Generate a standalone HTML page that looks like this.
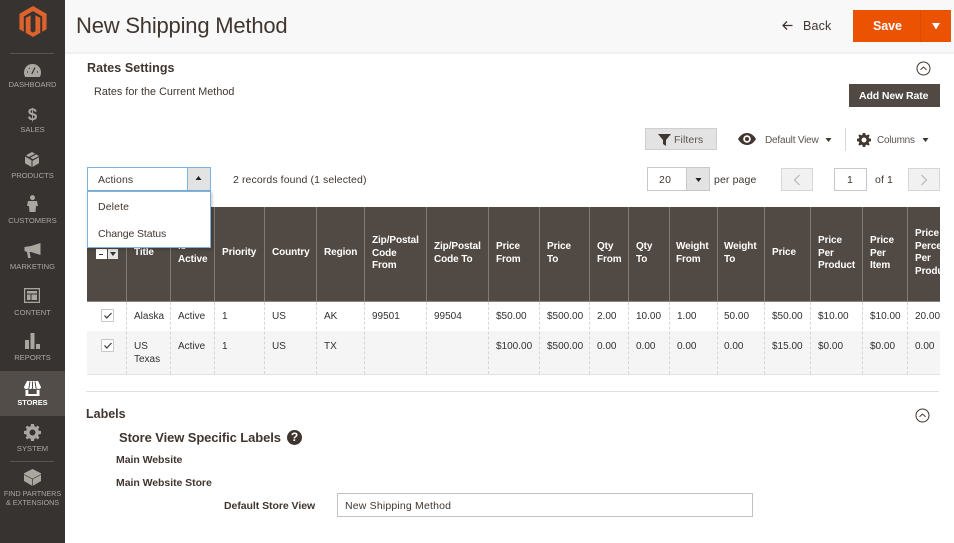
<!DOCTYPE html>
<html><head><meta charset="utf-8"><title>New Shipping Method</title>
<style>
html,body{margin:0;padding:0;width:954px;height:543px;overflow:hidden;background:#fff}
body{font-family:"Liberation Sans",sans-serif;color:#41362f;position:relative;filter:blur(.3px)}
.a{position:absolute}
.t{position:absolute;white-space:nowrap;font-size:10.5px;line-height:12px;color:#41362f;letter-spacing:.12px}
.n{position:absolute;left:0;width:65px;text-align:center;font-size:7.6px;line-height:9px;color:#aaa6a0;white-space:nowrap}
.h{position:absolute;white-space:nowrap;font-size:10px;line-height:12.6px;font-weight:bold;color:#fff;letter-spacing:-.1px}
.c{position:absolute;white-space:nowrap;font-size:10px;line-height:13px;color:#303030;letter-spacing:0}
.vh{position:absolute;top:207px;height:94px;width:1px;background:#7f7a75}
.vd{position:absolute;top:302px;height:72px;width:0;border-left:1px dashed #d6d6d6}
.cb{position:absolute;left:101px;width:11px;height:11px;border:1px solid #c8c8c8;background:#fff;border-radius:1px}
</style></head><body>

<div class="a" style="left:65px;top:0;width:889px;height:53px;background:#f8f8f8"></div>
<div class="a" style="left:65px;top:52px;width:889px;height:2px;background:#f0f0f0"></div>
<div class="t" style="left:76px;top:12px;font-size:22px;line-height:28px;letter-spacing:-.2px;color:#41362f">New Shipping Method</div>

<svg class="a" style="left:781px;top:20px" width="13" height="11" viewBox="0 0 13 11"><path d="M11.5 5.5H2M6 1.5 2 5.5l4 4" fill="none" stroke="#41362f" stroke-width="1.3"/></svg>
<div class="t" style="left:803px;top:18px;font-size:12.5px;line-height:16px;color:#41362f;letter-spacing:.15px">Back</div>
<div class="a" style="left:853px;top:10px;width:98px;height:32px;background:#eb5202"></div>
<div class="a" style="left:920px;top:10px;width:1px;height:32px;background:#d84c04"></div>
<div class="t" style="left:873px;top:18px;font-size:12.5px;line-height:16px;font-weight:bold;color:#fff;letter-spacing:-.1px">Save</div>
<svg class="a" style="left:931px;top:23px" width="10" height="7"><path d="M1 0h8L5 6.5z" fill="#fff"/></svg>

<div class="a" style="left:0;top:0;width:65px;height:543px;background:#373330"></div>
<svg class="a" style="left:19px;top:6px" width="28" height="31" viewBox="0 0 28 32"><path fill="#dd622c" d="M14 0 28 8V24L23.500 26.600V10.800L14 5.300 4.500 10.800V26.600L0 24V8ZM14 32 6.500 27.700V12.300L11.500 9.600V26L14 27.500 16.500 26V9.600L21.500 12.300V27.700Z"/></svg>
<div class="a" style="left:10px;top:53px;width:44px;height:1px;background:#5a5551"></div>
<div class="a" style="left:10px;top:461px;width:44px;height:1px;background:#5a5551"></div>
<div class="a" style="left:0;top:371px;width:65px;height:45px;background:#524d49"></div>

<svg class="a" style="left:24px;top:64px" width="17" height="13" viewBox="0 0 17 13"><path fill="#aaa6a0" d="M8.5 0C3.8 0 0 3.7 0 8.4 0 10 .4 11.600 1.200 13H15.800C16.600 11.600 17 10 17 8.400 17 3.700 13.200 0 8.500 0Z"/><path stroke="#373330" stroke-width="1.200" d="M7.800 10 11 3.500M3 8h1M13 8h1M5 4l.6.7" fill="none"/></svg>
<div class="n" style="top:80px">DASHBOARD</div>
<div class="a" style="left:0;width:65px;top:105px;text-align:center;font-size:17px;line-height:20px;font-weight:bold;color:#aaa6a0">$</div>
<div class="n" style="top:125px">SALES</div>
<svg class="a" style="left:25px;top:152px" width="14" height="15" viewBox="0 0 14 15"><path fill="#aaa6a0" d="M7 0 10 1.700 4 5 1 3.300ZM11.200 2.400 14 4 8 7.300 5.200 5.700ZM0 4.500 6.500 8.200V15L0 11.300ZM14 5.200V11.300L7.500 15V8.900Z"/></svg>
<div class="n" style="top:171px">PRODUCTS</div>
<svg class="a" style="left:27px;top:195px" width="11" height="17" viewBox="0 0 11 17"><circle cx="5.500" cy="2.600" r="2.500" fill="#aaa6a0"/><path fill="#aaa6a0" d="M1 6h9l1 5H9l-.5 6h-6L2 11H0Z"/></svg>
<div class="n" style="top:216px">CUSTOMERS</div>
<svg class="a" style="left:24px;top:243px" width="17" height="15" viewBox="0 0 17 15"><path fill="#aaa6a0" d="M16.500 0V12L7 9H5.500L6.800 15H4L3 9 .5 8V4L7 3Z"/></svg>
<div class="n" style="top:262px">MARKETING</div>
<svg class="a" style="left:24px;top:288px" width="16" height="15" viewBox="0 0 16 15"><path fill="none" stroke="#aaa6a0" stroke-width="1.200" d="M.6.600h14.800v13.800H.6z"/><path fill="#aaa6a0" d="M3 3h10v2.500H3zM3 6.500h3.500V12H3zM7.500 6.500H13V12H7.500z"/></svg>
<div class="n" style="top:308px">CONTENT</div>
<svg class="a" style="left:25px;top:333px" width="15" height="16" viewBox="0 0 15 16"><path fill="#aaa6a0" d="M0 7h4v9H0zM5.500 0h4v16h-4zM11 11h4v5h-4z"/></svg>
<div class="n" style="top:353px">REPORTS</div>
<svg class="a" style="left:24px;top:381px" width="17" height="15" viewBox="0 0 17 15"><path fill="#fff" d="M3 0H14L17 6C17 7.400 15.800 8 14.800 8 13.800 8 13 7.500 12.700 7 12.300 7.500 11.500 8 10.600 8 9.700 8 9 7.500 8.500 7 8 7.500 7.300 8 6.400 8 5.500 8 4.700 7.500 4.300 7 4 7.500 3.200 8 2.200 8 1.200 8 0 7.400 0 6ZM1.500 8.800C2.500 9.200 3.500 9 4.300 8.500V13H12.700V8.500C13.500 9 14.500 9.200 15.500 8.800V15H1.500Z"/><path stroke="#524d49" d="M6 .5 5 7M8.500.5V7M11 .5 12 7" fill="none"/></svg>
<div class="n" style="top:398px;color:#fff;font-weight:bold;font-size:7.400px">STORES</div>
<svg class="a" style="left:24px;top:424px" width="17" height="17" viewBox="0 0 17 17"><path fill="#aaa6a0" fill-rule="evenodd" d="M7 0h3l.4 2.300 1.500.6L13.800 1.600 15.400 3.200 14.100 5.100l.6 1.500L17 7v3l-2.300.4-.6 1.500 1.300 1.900-1.600 1.600-1.900-1.300-1.500.6L10 17H7l-.4-2.300-1.500-.6-1.900 1.300-1.600-1.600 1.300-1.900-.6-1.500L0 10V7l2.300-.4.600-1.500L1.600 3.200 3.200 1.600 5.100 2.900l1.500-.6ZM8.500 5.500a3 3 0 1 0 0 6 3 3 0 0 0 0-6Z"/></svg>
<div class="n" style="top:444px">SYSTEM</div>
<svg class="a" style="left:24px;top:469px" width="17" height="17" viewBox="0 0 17 17"><path fill="#aaa6a0" d="M8.500 0 17 4.200V12L8.500 17 0 12V4.200Z"/><path stroke="#373330" stroke-width=".7" fill="none" d="M0 5.500 8.500 10 17 5.500M8.500 10V17"/></svg>
<div class="n" style="top:489px;font-size:7.200px">FIND PARTNERS</div>
<div class="n" style="top:498px;font-size:7.200px">&amp; EXTENSIONS</div>

<div class="t" style="left:87px;top:60px;font-size:12.500px;line-height:16px;font-weight:bold;letter-spacing:.05px">Rates Settings</div>
<svg class="a" style="left:916px;top:61px" width="15" height="15" viewBox="0 0 15 15"><circle cx="7.500" cy="7.500" r="6.500" fill="none" stroke="#41362f" stroke-width="1"/><path d="M4.500 8.800 7.500 6l3 2.800" fill="none" stroke="#41362f" stroke-width="1"/></svg>
<div class="t" style="left:94px;top:86px;font-size:10.800px;letter-spacing:.02px">Rates for the Current Method</div>
<div class="a" style="left:849px;top:84px;width:91px;height:23px;background:#514943"></div>
<div class="t" style="left:859px;top:90px;font-size:10.500px;font-weight:bold;color:#fff;letter-spacing:-.1px">Add New Rate</div>

<div class="a" style="left:645px;top:128px;width:72px;height:22px;background:#e3e3e3;border:1px solid #cfcfcf;box-sizing:border-box"></div>
<svg class="a" style="left:658px;top:134px" width="13" height="12"><path d="M0 0h13L8 6v6L5 10V6z" fill="#41362f"/></svg>
<div class="t" style="left:674px;top:134px;color:#5a5550;letter-spacing:.1px">Filters</div>
<svg class="a" style="left:738px;top:133px" width="18" height="12" viewBox="0 0 18 12"><path fill="#41362f" fill-rule="evenodd" d="M9 0C5 0 2 2.500 0 6c2 3.500 5 6 9 6s7-2.500 9-6C16 2.500 13 0 9 0ZM9 2.200A3.800 3.800 0 1 1 9 9.800 3.800 3.800 0 0 1 9 2.200Z"/><circle cx="9" cy="6" r="2" fill="#41362f"/></svg>
<div class="t" style="left:765px;top:135px;color:#5a5550;font-size:10px;letter-spacing:-.2px">Default View</div>
<svg class="a" style="left:825px;top:138px" width="7" height="5"><path d="M.5 0h6L3.500 4z" fill="#41362f"/></svg>
<div class="a" style="left:845px;top:128px;width:1px;height:23px;background:#d8d8d8"></div>
<svg class="a" style="left:857px;top:133px" width="14" height="14" viewBox="0 0 17 17"><path fill="#41362f" fill-rule="evenodd" d="M7 0h3l.4 2.300 1.500.6L13.800 1.600 15.400 3.200 14.100 5.100l.6 1.500L17 7v3l-2.300.4-.6 1.500 1.300 1.900-1.600 1.600-1.900-1.300-1.500.6L10 17H7l-.4-2.300-1.500-.6-1.900 1.300-1.600-1.600 1.300-1.900-.6-1.500L0 10V7l2.300-.4.600-1.500L1.600 3.200 3.200 1.600 5.100 2.900l1.500-.6ZM8.500 5.500a3 3 0 1 0 0 6 3 3 0 0 0 0-6Z"/></svg>
<div class="t" style="left:877px;top:135px;color:#5a5550;font-size:10px;letter-spacing:-.25px">Columns</div>
<svg class="a" style="left:922px;top:138px" width="7" height="5"><path d="M.5 0h6L3.500 4z" fill="#41362f"/></svg>

<div class="a" style="left:87px;top:167px;width:124px;height:24px;border:1px solid #7db3dc;box-sizing:border-box;background:#fff"></div>
<div class="a" style="left:187px;top:167px;width:24px;height:24px;border:1px solid #7db3dc;box-sizing:border-box;background:#e3e3e3"></div>
<svg class="a" style="left:195px;top:176px" width="7" height="5"><path d="M.5 4h6L3.500 0z" fill="#222"/></svg>
<div class="t" style="left:98px;top:174px">Actions</div>
<div class="t" style="left:233px;top:174px;letter-spacing:.1px">2 records found (1 selected)</div>

<div class="a" style="left:647px;top:167px;width:63px;height:24px;border:1px solid #c8c8c8;box-sizing:border-box;background:#fff"></div>
<div class="a" style="left:686px;top:167px;width:24px;height:24px;border:1px solid #c8c8c8;box-sizing:border-box;background:#e3e3e3"></div>
<svg class="a" style="left:695px;top:178px" width="7" height="5"><path d="M.5 0h6L3.500 4z" fill="#222"/></svg>
<div class="t" style="left:659px;top:174px;letter-spacing:.3px">20</div>
<div class="t" style="left:714px;top:174px">per page</div>
<div class="a" style="left:781px;top:168px;width:32px;height:23px;border:1px solid #d6d6d6;box-sizing:border-box;background:#f1f1f1"></div>
<svg class="a" style="left:793px;top:174px" width="8" height="12"><path d="M6.500 1 1.500 6l5 5" fill="none" stroke="#b5b5b5" stroke-width="1.200"/></svg>
<div class="a" style="left:834px;top:168px;width:33px;height:23px;border:1px solid #c8c8c8;box-sizing:border-box;background:#fff"></div>
<div class="t" style="left:847px;top:174px">1</div>
<div class="t" style="left:875px;top:174px">of 1</div>
<div class="a" style="left:908px;top:168px;width:32px;height:23px;border:1px solid #d6d6d6;box-sizing:border-box;background:#f1f1f1"></div>
<svg class="a" style="left:920px;top:174px" width="8" height="12"><path d="M1.500 1l5 5-5 5" fill="none" stroke="#b5b5b5" stroke-width="1.200"/></svg>

<div class="a" style="left:87px;top:207px;width:853px;height:94px;background:#514943"></div>
<div class="a" style="left:87px;top:301px;width:853px;height:1px;background:#8a8580"></div>
<div class="a" style="left:87px;top:331px;width:853px;height:43px;background:#f5f5f5"></div>
<div class="a" style="left:87px;top:374px;width:853px;height:1px;background:#e3e3e3"></div>

<div class="vh" style="left:126px"></div><div class="vh" style="left:170px"></div><div class="vh" style="left:214px"></div><div class="vh" style="left:264px"></div><div class="vh" style="left:316px"></div><div class="vh" style="left:364px"></div><div class="vh" style="left:426px"></div><div class="vh" style="left:488px"></div><div class="vh" style="left:539px"></div><div class="vh" style="left:589px"></div><div class="vh" style="left:628px"></div><div class="vh" style="left:669px"></div><div class="vh" style="left:717px"></div><div class="vh" style="left:764px"></div><div class="vh" style="left:810px"></div><div class="vh" style="left:862px"></div><div class="vh" style="left:907px"></div>
<div class="vd" style="left:126px"></div><div class="vd" style="left:170px"></div><div class="vd" style="left:214px"></div><div class="vd" style="left:264px"></div><div class="vd" style="left:316px"></div><div class="vd" style="left:364px"></div><div class="vd" style="left:426px"></div><div class="vd" style="left:488px"></div><div class="vd" style="left:539px"></div><div class="vd" style="left:589px"></div><div class="vd" style="left:628px"></div><div class="vd" style="left:669px"></div><div class="vd" style="left:717px"></div><div class="vd" style="left:764px"></div><div class="vd" style="left:810px"></div><div class="vd" style="left:862px"></div><div class="vd" style="left:907px"></div>

<div class="a" style="left:96px;top:249px;width:11px;height:10px;background:#fff"></div>
<div class="a" style="left:108px;top:249px;width:10px;height:10px;background:#e3e3e3"></div>
<div class="a" style="left:99px;top:254px;width:4px;height:1px;background:#333"></div>
<svg class="a" style="left:110px;top:252px" width="6" height="4"><path d="M0 0h6L3 4z" fill="#333"/></svg>

<div class="h" style="left:134px;top:247px">Title</div>
<div class="h" style="left:178px;top:241px">Is<br>Active</div>
<div class="h" style="left:222px;top:247px">Priority</div>
<div class="h" style="left:272px;top:247px">Country</div>
<div class="h" style="left:324px;top:247px">Region</div>
<div class="h" style="left:372px;top:235px">Zip/Postal<br>Code<br>From</div>
<div class="h" style="left:434px;top:241px">Zip/Postal<br>Code To</div>
<div class="h" style="left:496px;top:241px">Price<br>From</div>
<div class="h" style="left:547px;top:241px">Price<br>To</div>
<div class="h" style="left:597px;top:241px">Qty<br>From</div>
<div class="h" style="left:636px;top:241px">Qty<br>To</div>
<div class="h" style="left:676px;top:241px">Weight<br>From</div>
<div class="h" style="left:724px;top:241px">Weight<br>To</div>
<div class="h" style="left:772px;top:247px">Price</div>
<div class="h" style="left:818px;top:235px">Price<br>Per<br>Product</div>
<div class="h" style="left:870px;top:235px">Price<br>Per<br>Item</div>
<div class="a" style="left:907px;top:207px;width:33px;height:94px;overflow:hidden"><div class="h" style="left:8px;top:21px">Price<br>Percent<br>Per<br>Product</div></div>

<div class="cb" style="top:309px"></div>
<svg class="a" style="left:103px;top:311px" width="10" height="9"><path d="M1.500 4.500 3.800 7 8.500 2" fill="none" stroke="#41362f" stroke-width="1.200"/></svg>
<div class="cb" style="top:339px"></div>
<svg class="a" style="left:103px;top:341px" width="10" height="9"><path d="M1.500 4.500 3.800 7 8.500 2" fill="none" stroke="#41362f" stroke-width="1.200"/></svg>

<div class="c" style="left:134px;top:310px">Alaska</div><div class="c" style="left:178px;top:310px">Active</div><div class="c" style="left:222px;top:310px">1</div><div class="c" style="left:272px;top:310px">US</div><div class="c" style="left:324px;top:310px">AK</div><div class="c" style="left:372px;top:310px">99501</div><div class="c" style="left:434px;top:310px">99504</div><div class="c" style="left:496px;top:310px">$50.00</div><div class="c" style="left:547px;top:310px">$500.00</div><div class="c" style="left:597px;top:310px">2.00</div><div class="c" style="left:636px;top:310px">10.00</div><div class="c" style="left:677px;top:310px">1.00</div><div class="c" style="left:724px;top:310px">50.00</div><div class="c" style="left:772px;top:310px">$50.00</div><div class="c" style="left:818px;top:310px">$10.00</div><div class="c" style="left:870px;top:310px">$10.00</div><div class="a" style="left:908px;top:302px;width:32px;height:28px;overflow:hidden"><div class="c" style="left:7px;top:8px">20.00</div></div>
<div class="c" style="left:134px;top:340px">US<br>Texas</div><div class="c" style="left:178px;top:340px">Active</div><div class="c" style="left:222px;top:340px">1</div><div class="c" style="left:272px;top:340px">US</div><div class="c" style="left:324px;top:340px">TX</div><div class="c" style="left:496px;top:340px">$100.00</div><div class="c" style="left:547px;top:340px">$500.00</div><div class="c" style="left:597px;top:340px">0.00</div><div class="c" style="left:636px;top:340px">0.00</div><div class="c" style="left:677px;top:340px">0.00</div><div class="c" style="left:724px;top:340px">0.00</div><div class="c" style="left:772px;top:340px">$15.00</div><div class="c" style="left:818px;top:340px">$0.00</div><div class="c" style="left:870px;top:340px">$0.00</div><div class="c" style="left:915px;top:340px">0.00</div>

<div class="a" style="left:87px;top:191px;width:124px;height:57px;background:#fff;border:1px solid #7db3dc;box-sizing:border-box;box-shadow:1px 1px 3px rgba(0,0,0,.25)"></div>
<div class="t" style="left:98px;top:201px">Delete</div>
<div class="t" style="left:98px;top:228px;letter-spacing:-.1px">Change Status</div>

<div class="a" style="left:86px;top:391px;width:853px;height:1px;background:#e0e0e0"></div>
<div class="t" style="left:86px;top:406px;font-size:12.500px;line-height:16px;font-weight:bold;letter-spacing:0">Labels</div>
<svg class="a" style="left:915px;top:408px" width="15" height="15" viewBox="0 0 15 15"><circle cx="7.500" cy="7.500" r="6.500" fill="none" stroke="#41362f" stroke-width="1"/><path d="M4.500 8.800 7.500 6l3 2.800" fill="none" stroke="#41362f" stroke-width="1"/></svg>
<div class="t" style="left:119px;top:430px;font-size:13px;line-height:16px;font-weight:bold;letter-spacing:-.1px">Store View Specific Labels</div>
<div class="a" style="left:287px;top:430px;width:15px;height:15px;border-radius:50%;background:#41362f;color:#fff;font-size:12px;line-height:15px;font-weight:bold;text-align:center">?</div>
<div class="t" style="left:116px;top:454px;font-weight:bold;letter-spacing:-.05px">Main Website</div>
<div class="t" style="left:116px;top:477px;font-weight:bold;letter-spacing:-.05px">Main Website Store</div>
<div class="t" style="left:224px;top:500px;font-weight:bold;letter-spacing:-.05px">Default Store View</div>
<div class="a" style="left:337px;top:493px;width:416px;height:24px;border:1px solid #c2c2c2;box-sizing:border-box;background:#fff"></div>
<div class="t" style="left:345px;top:500px;letter-spacing:.18px">New Shipping Method</div>
</body></html>
